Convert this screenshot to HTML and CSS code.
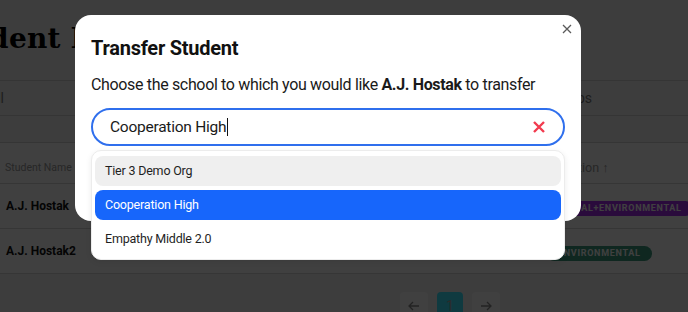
FILE: index.html
```html
<!DOCTYPE html>
<html lang="en">
<head>
<meta charset="utf-8">
<title>Transfer Student</title>
<link rel="stylesheet" href="styles.css">
</head>
<body>
<div class="page">
  <header class="page-header">
    <h1 class="page-title">Student Directory</h1>
  </header>
  <nav class="tabs">
    <span class="tab tab-first">All</span>
    <span class="tab tab-last">Groups</span>
  </nav>
  <div class="toolbar"></div>
  <div class="table">
    <div class="row head">
      <span class="cell name-head">Student Name</span>
      <span class="cell int-head">Intervention ↑</span>
    </div>
    <div class="row">
      <span class="cell name">A.J. Hostak</span>
      <span class="cell"><span class="badge purple">SOCIAL+ENVIRONMENTAL</span></span>
    </div>
    <div class="row">
      <span class="cell name">A.J. Hostak2</span>
      <span class="cell"><span class="badge green">ENVIRONMENTAL</span></span>
    </div>
  </div>
  <div class="pager">
    <button class="pg">
      <svg width="12" height="10" viewBox="0 0 12 10"><path d="M11 5H1M5 1L1 5l4 4" fill="none" stroke="#8a8a8a" stroke-width="1.3"/></svg>
    </button>
    <button class="pg current">1</button>
    <button class="pg">
      <svg width="12" height="10" viewBox="0 0 12 10"><path d="M1 5h10M7 1l4 4-4 4" fill="none" stroke="#8a8a8a" stroke-width="1.3"/></svg>
    </button>
  </div>
</div>

<div class="overlay"></div>

<div class="modal" role="dialog" aria-labelledby="mt">
  <button class="close" aria-label="Close">
    <svg width="10" height="10" viewBox="0 0 10 10"><path d="M1 1l8 8M9 1L1 9" stroke="#5a5a5a" stroke-width="1.3" fill="none"/></svg>
  </button>
  <h2 class="modal-title" id="mt">Transfer Student</h2>
  <p class="modal-text">Choose the school to which you would like <b>A.J. Hostak</b> to transfer</p>
  <div class="combo">
    <div class="field" role="combobox">
      <span class="value">Cooperation High</span><span class="caret"></span>
      <span class="clear">
        <svg width="12" height="12" viewBox="0 0 12 12"><path d="M1 1l10 10M11 1L1 11" stroke="#f23b4f" stroke-width="2.4" fill="none"/></svg>
      </span>
    </div>
    <ul class="menu" role="listbox">
      <li class="opt hover">Tier 3 Demo Org</li>
      <li class="opt selected">Cooperation High</li>
      <li class="opt">Empathy Middle 2.0</li>
    </ul>
  </div>
</div>
</body>
</html>
```
FILE: styles.css
```css
* { box-sizing: border-box; }
html, body { margin: 0; padding: 0; }
body {
  width: 688px;
  height: 312px;
  overflow: hidden;
  font-family: Roboto, "Liberation Sans", sans-serif;
  background: #f3f3f3;
  position: relative;
}
.page { width: 688px; }
.page-header {
  height: 81px;
  border-bottom: 1px solid #d4d4d4;
  overflow: hidden;
}
.page-title {
  margin: 0 0 0 -65px;
  padding-top: 22px;
  font-family: "DejaVu Serif", serif;
  font-weight: bold;
  font-size: 28px;
  letter-spacing: 0.2px;
  line-height: 34px;
  color: #000;
  white-space: nowrap;
}
.tabs {
  height: 35px;
  border-bottom: 1px solid #d4d4d4;
  display: flex;
  align-items: center;
  justify-content: space-between;
  font-size: 14px;
  color: #7a7a7a;
}
.tab-first { margin-left: -12px; }
.tab-last { margin-right: 96px; }
.toolbar {
  height: 27px;
  border-bottom: 1px solid #d4d4d4;
}
.table { background: #fff; }
.row {
  display: grid;
  grid-template-columns: 547px 1fr;
  align-items: center;
  height: 45px;
  border-bottom: 1px solid #d8d8d8;
}
.row.head {
  height: 41px;
  padding-top: 9px;
}
.cell { white-space: nowrap; }
.name-head, .int-head { color: #9a9a9a; }
.name-head { padding-left: 5px; font-size: 10.5px; }
.int-head { margin-left: -14px; font-size: 12.5px; }
.name { padding-left: 6px; font-size: 12px; font-weight: 700; color: #111; }
.badge {
  display: inline-block;
  height: 15px;
  line-height: 15px;
  padding: 0 11px;
  border-radius: 8px;
  font-size: 9px;
  font-weight: 700;
  letter-spacing: 0.7px;
  color: #fff;
}
.badge.purple { background: #a82ef0; }
.badge.green { background: #3c9c80; }
.pager {
  display: flex;
  gap: 9px;
  padding-left: 400px;
  margin-top: 18px;
}
.pg {
  width: 28px;
  height: 28px;
  border: 0;
  border-radius: 4px;
  background: #fff;
  display: flex;
  align-items: center;
  justify-content: center;
  font-family: Roboto, sans-serif;
  font-size: 14px;
  color: #999;
  padding: 0;
}
.pg.current { width: 26px; background: #3ce6ff; color: #aaa; }

.overlay {
  position: absolute;
  inset: 0;
  background: rgba(0, 0, 0, 0.75);
}

.modal {
  position: absolute;
  left: 75px;
  top: 15px;
  width: 506px;
  height: 206px;
  background: #fff;
  border-radius: 16px;
  padding: 21px 16px 0;
}
.close {
  position: absolute;
  top: 4px;
  right: 4px;
  width: 20px;
  height: 20px;
  border: 0;
  background: none;
  padding: 0;
  display: flex;
  align-items: center;
  justify-content: center;
}
.modal-title {
  margin: 0;
  font-size: 20px;
  line-height: 24px;
  font-weight: 700;
  letter-spacing: -0.25px;
  color: #111;
}
.modal-text {
  margin: 13px 0 0;
  font-size: 16px;
  line-height: 24px;
  letter-spacing: -0.34px;
  color: #1a1a1a;
  white-space: nowrap;
}
.modal-text b { font-weight: 700; }
.combo {
  position: relative;
  margin-top: 11px;
}
.field {
  height: 38px;
  border: 2px solid #2f6fed;
  border-radius: 19px;
  display: flex;
  align-items: center;
  padding: 0 18px 0 17px;
  font-size: 15.5px;
  letter-spacing: -0.25px;
  color: #1a1a1a;
}
.caret {
  width: 1px;
  height: 18px;
  background: #111;
  margin-left: 1px;
}
.clear {
  margin-left: auto;
  display: flex;
}
.menu {
  position: absolute;
  left: 0;
  right: 0;
  top: 42px;
  margin: 0;
  list-style: none;
  background: #fff;
  border: 1px solid #ececec;
  border-radius: 10px;
  box-shadow: 0 2px 6px rgba(0,0,0,0.08);
  padding: 5px 3px;
  display: flex;
  flex-direction: column;
  gap: 4px;
}
.opt {
  height: 30px;
  line-height: 30px;
  padding-left: 10px;
  border-radius: 8px;
  font-size: 12.5px;
  letter-spacing: -0.2px;
  color: #1f1f1f;
}
.opt.hover { background: #efefef; }
.opt.selected { background: #1766fb; color: #fff; }
```
